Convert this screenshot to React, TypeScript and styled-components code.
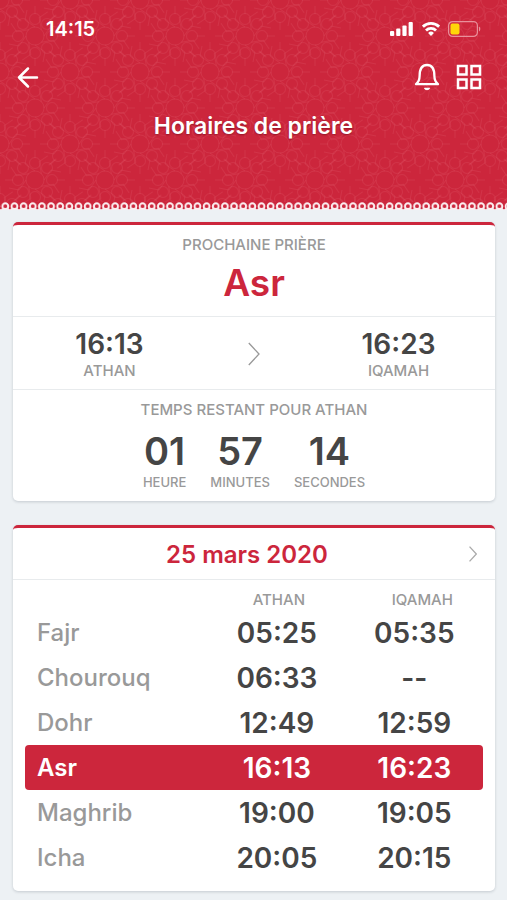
import React from "react";
import styled, { createGlobalStyle } from "styled-components";

const red = "#cc263c";
const ink = "#454545";
const muted = "#999999";

const GlobalStyle = createGlobalStyle`
  *, *::before, *::after { box-sizing: border-box; }
  body {
    margin: 0;
    background: #edf1f4;
    font-family: Inter, "Liberation Sans", sans-serif;
    font-weight: 500;
    color: ${ink};
  }
  h1, h2, p { margin: 0; font-weight: inherit; }
`;

const Header = styled.header`
  position: relative;
  isolation: isolate;
  height: 210px;
  background: ${red};
  color: #fff;
`;

const Ornament = styled.svg`
  position: absolute;
  inset: 0;
  z-index: -1;
  width: 100%;
  height: 100%;
`;

const StatusBar = styled.div`
  display: flex;
  align-items: center;
  justify-content: space-between;
  padding: 17px 26px 0 46px;
  height: 41px;
  font-size: 20px;
  font-weight: 600;
  line-height: 24px;
`;

const StatusIcons = styled.div`
  display: flex;
  align-items: center;
  gap: 8px;
`;

const NavBar = styled.nav`
  display: flex;
  align-items: center;
  justify-content: space-between;
  height: 71px;
  padding: 0 25px 0 16px;
`;

const NavActions = styled.div`
  display: flex;
  gap: 16px;
`;

const IconButton = styled.button`
  display: flex;
  padding: 0;
  border: 0;
  background: none;
  color: inherit;
  cursor: pointer;
`;

const Title = styled.h1`
  text-align: center;
  font-size: 23px;
  font-weight: 600;
  line-height: 28px;
  text-shadow: 0 1px 2px rgba(90, 0, 15, 0.5);
`;

const Main = styled.main`
  display: flex;
  flex-direction: column;
  gap: 24px;
  padding: 12px 12px 9px 13px;
`;

const Card = styled.section`
  border-top: 3px solid ${red};
  border-radius: 5px;
  background: #fff;
  box-shadow: 0 1px 3px rgba(40, 55, 70, 0.2);
`;

const Section = styled.div`
  padding: 10px 12px 9px;
  text-align: center;
  & + & { border-top: 1px solid #e8ebed; }
`;

const Label = styled.p<{ $small?: boolean }>`
  color: ${muted};
  font-size: ${(p) => (p.$small ? 13 : 15)}px;
  line-height: 20px;
`;

const NextPrayer = styled.h2`
  padding: 4px 0 0;
  color: ${red};
  font-size: 37px;
  font-weight: 600;
  line-height: 48px;
`;

const TimesRow = styled(Section)`
  display: grid;
  grid-template-columns: 1fr 96px 1fr;
  align-items: center;
  padding: 10px 0 8px;
`;

const Time = styled.p`
  font-size: 28px;
  font-weight: 600;
  line-height: 34px;
`;

const Countdown = styled.div`
  display: flex;
  justify-content: center;
  gap: 24px;
  padding-top: 10px;
`;

const Digits = styled.p`
  font-size: 38px;
  font-weight: 600;
  line-height: 42px;
`;

const DateBar = styled.div`
  display: grid;
  grid-template-columns: 24px 1fr 24px;
  align-items: center;
  height: 52px;
  padding: 0 10px;
  border-bottom: 1px solid #e8ebed;
`;

const DateTitle = styled.h2`
  grid-column: 2;
  padding: 3px 14px 0 0;
  color: ${red};
  text-align: center;
  font-size: 24px;
  font-weight: 600;
  line-height: 32px;
`;

const TableWrap = styled.div`
  padding: 10px 12px 11px;
`;

const Table = styled.table`
  width: 100%;
  table-layout: fixed;
  border-collapse: collapse;
`;

const HeadCell = styled.th<{ $width: number; $indent?: number }>`
  width: ${(p) => p.$width}%;
  height: 20px;
  padding: 0 0 0 ${(p) => p.$indent ?? 0}px;
  color: ${muted};
  font-size: 15px;
  font-weight: 500;
  line-height: 20px;
`;

const NameCell = styled.th`
  padding: 0 12px;
  border-radius: 4px 0 0 4px;
  color: ${muted};
  text-align: left;
  font-size: 24px;
  font-weight: 500;
`;

const TimeCell = styled.td`
  padding: 0;
  text-align: center;
  font-size: 28px;
  font-weight: 600;
  &:last-child { border-radius: 0 4px 4px 0; }
`;

const Row = styled.tr<{ $current: boolean }>`
  height: 45px;
  ${NameCell}, ${TimeCell} {
    ${(p) => p.$current && `background: ${red}; color: #fff;`}
  }
  ${NameCell} {
    ${(p) => p.$current && "font-weight: 600;"}
  }
`;

const prayers = [
  ["Fajr", "05:25", "05:35"],
  ["Chourouq", "06:33", "--"],
  ["Dohr", "12:49", "12:59"],
  ["Asr", "16:13", "16:23"],
  ["Maghrib", "19:00", "19:05"],
  ["Icha", "20:05", "20:15"],
];

const countdown = [
  ["01", "HEURE"],
  ["57", "MINUTES"],
  ["14", "SECONDES"],
];

const petals = [0, 45, 90, 135, 180, 225, 270, 315];

function Rosette({ x, y }: { x: number; y: number }) {
  return (
    <g transform={`translate(${x} ${y})`}>
      <circle r="9" />
      {petals.map((angle) => (
        <g key={angle} transform={`rotate(${angle})`}>
          <circle cx="17" r="5.500" />
          <path d="M9 0 16 -10 26 -8M22 0H30" />
        </g>
      ))}
    </g>
  );
}

function HeaderOrnament() {
  return (
    <Ornament aria-hidden="true">
      <defs>
        <pattern id="rosettes" width="70" height="72" patternUnits="userSpaceOnUse">
          <g fill="none" stroke="#e8697a" strokeOpacity="0.2" strokeWidth="1">
            <Rosette x={35} y={36} />
            <Rosette x={0} y={0} />
            <Rosette x={70} y={0} />
            <Rosette x={0} y={72} />
            <Rosette x={70} y={72} />
          </g>
        </pattern>
        <pattern id="lace" width="9.15" height="8" x="0.7" y="202" patternUnits="userSpaceOnUse">
          <rect y="5" width="9.15" height="3" fill="#f6f0f2" />
          <circle cx="0" cy="6" r="1.3" fill={red} />
          <circle cx="9.15" cy="6" r="1.3" fill={red} />
          <circle cx="4.6" cy="4.2" r="2.9" fill={red} stroke="#fbeef0" strokeWidth="2" />
        </pattern>
      </defs>
      <rect width="100%" height="202" fill="url(#rosettes)" />
      <rect y="202" width="100%" height="8" fill="url(#lace)" />
    </Ornament>
  );
}

function Chevron({ size, color }: { size: number; color: string }) {
  return (
    <svg width={size / 2} height={size} viewBox="0 0 12 24" fill="none" stroke={color} strokeWidth={32 / size} aria-hidden="true">
      <path d="M.8 1 11 12 .8 23" />
    </svg>
  );
}

const ChevronSlot = styled.span`
  display: flex;
  justify-content: center;
`;

const NextDay = styled(IconButton)`
  grid-column: 3;
  justify-content: center;
`;

export default function App() {
  return (
    <>
      <GlobalStyle />
      <Header>
        <HeaderOrnament />
        <StatusBar>
          <span>14:15</span>
          <StatusIcons>
            <svg width="24" height="16" viewBox="0 0 24 16" fill="#fff" aria-hidden="true">
              <rect x="0" y="10" width="4.200" height="5" rx="1" />
              <rect x="6.2" y="7.5" width="4.200" height="7.5" rx="1" />
              <rect x="12.4" y="4.5" width="4.200" height="10.5" rx="1" />
              <rect x="18.6" y="1" width="4.200" height="14" rx="1" />
            </svg>
            <svg width="18" height="16" viewBox="0 0 18 16" fill="none" stroke="#fff" strokeWidth="2.8" aria-hidden="true">
              <path d="M.9 5.7a11.5 11.5 0 0 1 16.2 0M4 9.400a7.1 7.1 0 0 1 10 0" />
              <path d="M9 15 6.1 12a4.1 4.1 0 0 1 5.8 0Z" fill="#fff" stroke="none" />
            </svg>
            <svg width="33" height="16" viewBox="0 0 33 16" aria-hidden="true">
              <rect x=".6" y=".6" width="28.8" height="14.8" rx="4" fill="none" stroke="#e9909b" strokeWidth="1.2" />
              <rect x="2.5" y="2.5" width="9" height="11" rx="2" fill="#ffd60a" />
              <path d="M31 5.5c1.7.7 1.7 4.3 0 5Z" fill="#e9909b" />
            </svg>
          </StatusIcons>
        </StatusBar>
        <NavBar>
          <IconButton aria-label="Retour">
            <svg width="24" height="24" viewBox="0 0 24 24" fill="none" stroke="currentColor" strokeWidth="2.5" strokeLinecap="round" strokeLinejoin="round">
              <path d="M21 12.500H3M12 3.500l-9 9 9 9" />
            </svg>
          </IconButton>
          <NavActions>
            <IconButton aria-label="Notifications">
              <svg width="26" height="28" viewBox="0 0 26 28" fill="none" stroke="currentColor" strokeWidth="2.3" strokeLinejoin="round" strokeLinecap="round">
                <path d="M2 21.2c2.8-2.3 3.6-4.2 3.6-8.2 0-5.8 1.7-11 7.4-11s7.4 5.2 7.4 11c0 4 .8 5.9 3.6 8.2Z" />
                <path d="M10.6 25.3c1 1.9 3.8 1.9 4.8 0Z" fill="currentColor" strokeWidth="1.2" />
              </svg>
            </IconButton>
            <IconButton aria-label="Menu">
              <svg width="26" height="28" viewBox="0 0 26 28" fill="none" stroke="currentColor" strokeWidth="2.5">
                <path d="M2 3h8.5v8.5H2ZM15.5 3H24v8.5h-8.5ZM2 16.5h8.5V25H2ZM15.5 16.5H24V25h-8.5Z" />
              </svg>
            </IconButton>
          </NavActions>
        </NavBar>
        <Title>Horaires de prière</Title>
      </Header>
      <Main>
        <Card>
          <Section>
            <Label>PROCHAINE PRIÈRE</Label>
            <NextPrayer>Asr</NextPrayer>
          </Section>
          <TimesRow>
            <div>
              <Time>16:13</Time>
              <Label>ATHAN</Label>
            </div>
            <ChevronSlot>
              <Chevron size={24} color="#999" />
            </ChevronSlot>
            <div>
              <Time>16:23</Time>
              <Label>IQAMAH</Label>
            </div>
          </TimesRow>
          <Section>
            <Label>TEMPS RESTANT POUR ATHAN</Label>
            <Countdown>
              {countdown.map(([value, unit]) => (
                <div key={unit}>
                  <Digits>{value}</Digits>
                  <Label $small>{unit}</Label>
                </div>
              ))}
            </Countdown>
          </Section>
        </Card>
        <Card>
          <DateBar>
            <DateTitle>25 mars 2020</DateTitle>
            <NextDay aria-label="Jour suivant">
              <Chevron size={16} color="#aaa" />
            </NextDay>
          </DateBar>
          <TableWrap>
            <Table>
              <thead>
                <tr>
                  <HeadCell $width={40} aria-label="Prière" />
                  <HeadCell $width={30} $indent={4} scope="col">ATHAN</HeadCell>
                  <HeadCell $width={30} $indent={16} scope="col">IQAMAH</HeadCell>
                </tr>
              </thead>
              <tbody>
                {prayers.map(([name, athan, iqamah]) => (
                  <Row key={name} $current={name === "Asr"}>
                    <NameCell scope="row">{name}</NameCell>
                    <TimeCell>{athan}</TimeCell>
                    <TimeCell>{iqamah}</TimeCell>
                  </Row>
                ))}
              </tbody>
            </Table>
          </TableWrap>
        </Card>
      </Main>
    </>
  );
}
